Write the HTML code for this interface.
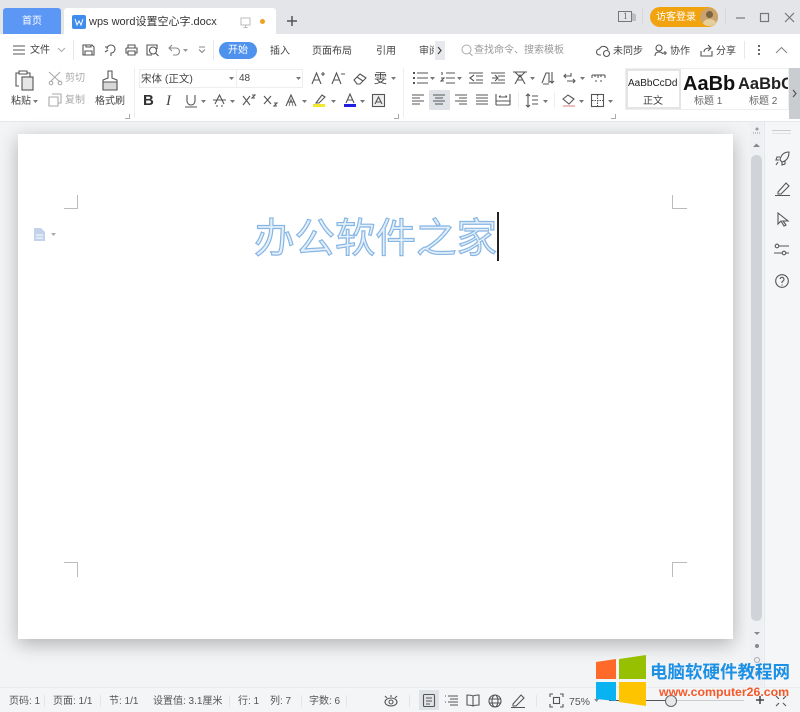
<!DOCTYPE html>
<html><head><meta charset="utf-8">
<style>
html,body{margin:0;padding:0}
body{width:800px;height:712px;overflow:hidden;position:relative;background:#f3f4f6;font-family:"Liberation Sans","Noto Sans CJK SC",sans-serif;color:#444}
.a{position:absolute;white-space:nowrap}
.t{font-size:10px;line-height:14px;color:#444}
svg{position:absolute;overflow:visible}
.ic{fill:none;stroke:#555;stroke-width:1.1}
.st{font-size:10px;line-height:14px;color:#555;top:695px}
.sp{position:absolute;top:695px;width:1px;height:12px;background:#e4e5e8}
</style></head><body>
<!-- title bar -->
<div class="a" style="left:0;top:0;width:800px;height:34px;background:#e3e5e9"></div>
<div class="a" style="left:3px;top:8px;width:58px;height:26px;background:#5d97f6;border-radius:3px 3px 0 0;color:#fff;font-size:10px;line-height:27px;text-align:center">首页</div>
<div class="a" style="left:64px;top:8px;width:212px;height:26px;background:#fff;border-radius:3px 3px 0 0"></div>
<div class="a" style="left:72px;top:15px;width:14px;height:14px;background:#3f8cec;border-radius:2px"></div>
<svg style="left:72px;top:15px" width="14" height="14"><path d="M3 4l2 6 2-4 2 4 2-6" fill="none" stroke="#fff" stroke-width="1"/></svg>
<div class="a" style="left:89px;top:15px;font-size:11px;line-height:15px;color:#333">wps word设置空心字.docx</div>
<svg style="left:240px;top:17px" width="12" height="12"><rect x="1" y="1" width="9" height="7" fill="none" stroke="#bbb"/><path d="M5.5 8v2M3.500 10.500h4" stroke="#bbb"/></svg>
<div class="a" style="left:260px;top:19px;width:5px;height:5px;border-radius:50%;background:#f0a020"></div>
<svg style="left:286px;top:15px" width="12" height="12"><path d="M6 1v10M1 6h10" stroke="#555" stroke-width="1.500"/></svg>
<svg style="left:618px;top:11px" width="18" height="12"><rect x=".5" y=".5" width="13" height="10" fill="none" stroke="#777"/><path d="M15 2v8M17 3v7" stroke="#999"/></svg>
<div class="a" style="left:623px;top:11px;font:9px/11px 'Liberation Serif';color:#666">1</div>
<div class="a" style="left:642px;top:9px;width:1px;height:15px;background:#d6d8dc"></div>
<div class="a" style="left:650px;top:7px;width:68px;height:20px;background:#f1a30f;border-radius:10px"></div>
<div class="a" style="left:656px;top:11px;font-size:10px;line-height:14px;color:#fff">访客登录</div>
<div class="a" style="left:700px;top:8px;width:18px;height:18px;border-radius:50%;background:#c9a36b;overflow:hidden"><div class="a" style="left:6px;top:3px;width:7px;height:7px;border-radius:50%;background:#7a6340"></div><div class="a" style="left:3px;top:11px;width:13px;height:9px;border-radius:50%;background:#e6cf9c"></div></div>
<div class="a" style="left:725px;top:9px;width:1px;height:15px;background:#d6d8dc"></div>
<svg style="left:735px;top:12px" width="60" height="12"><path d="M1 6h9" stroke="#777" stroke-width="1.200"/><rect x="25.500" y="1.500" width="8" height="8" fill="none" stroke="#777" stroke-width="1.200"/><path d="M50 1l9 9M59 1l-9 9" stroke="#777" stroke-width="1.200"/></svg>
<!-- ribbon -->
<div class="a" style="left:0;top:34px;width:800px;height:87px;background:#fff"></div>
<div class="a" style="left:0;top:121px;width:800px;height:1px;background:#e6e7ea"></div>
<svg style="left:13px;top:45px" width="13" height="10"><path d="M0 1h12M0 5h12M0 9h12" stroke="#555"/></svg>
<div class="a t" style="left:30px;top:44px;color:#444">文件</div>
<svg style="left:57px;top:47px" width="9" height="6"><path d="M1 1l3.500 3.500L8 1" fill="none" stroke="#aaa"/></svg>
<div class="a" style="left:73px;top:40px;width:1px;height:20px;background:#e8e8e8"></div>
<svg class="ic" style="left:82px;top:44px" width="13" height="12"><path d="M1 1h9l2 2v8H1zM3 11V7h7v4M4 1v2h5V1"/></svg>
<svg class="ic" style="left:104px;top:44px" width="13" height="13"><path d="M3 5a4 4 0 1 1 4 4v3M1 8l3-2M1 3h3"/></svg>
<svg class="ic" style="left:125px;top:44px" width="13" height="12"><path d="M3 4V1h7v3M1 4h11v5h-2M3 9H1V4M3 7h7v4H3z"/></svg>
<svg class="ic" style="left:146px;top:44px" width="13" height="13"><path d="M11 5V1H1v10h5"/><circle cx="7" cy="6.500" r="3.500"/><path d="M9.500 9l3 3"/></svg>
<svg class="ic" style="left:168px;top:44px;stroke:#888" width="13" height="12"><path d="M4 1L1 4l3 3M1 4h7a3 3 0 0 1 0 7H5"/></svg>
<svg style="left:183px;top:49px" width="6" height="4"><path d="M0 0h5L2.500 3z" fill="#999"/></svg>
<svg class="ic" style="left:198px;top:46px;stroke:#888" width="9" height="9"><path d="M1 1h6M1 3.500l3 3 3-3"/></svg>
<div class="a" style="left:213px;top:40px;width:1px;height:20px;background:#e8e8e8"></div>
<div class="a" style="left:219px;top:42px;width:38px;height:17px;border-radius:9px;background:#4e92ee;color:#fff;font-size:10px;line-height:18px;text-align:center">开始</div>
<div class="a t" style="left:270px;top:45px">插入</div>
<div class="a t" style="left:312px;top:45px">页面布局</div>
<div class="a t" style="left:376px;top:45px">引用</div>
<div class="a t" style="left:419px;top:45px;width:15px;overflow:hidden">审阅</div>
<div class="a" style="left:435px;top:41px;width:10px;height:19px;background:#e8e9ec"></div>
<svg style="left:437px;top:47px" width="6" height="8"><path d="M1 0l3 3.500L1 7" fill="none" stroke="#444" stroke-width="1.200"/></svg>
<svg style="left:461px;top:44px" width="12" height="13"><circle cx="5.500" cy="5.500" r="4.500" fill="none" stroke="#aaa"/><path d="M8.500 9l3 3" stroke="#aaa"/></svg>
<div class="a t" style="left:474px;top:44px;color:#999">查找命令、搜索模板</div>
<svg class="ic" style="left:596px;top:44px" width="15" height="13"><path d="M5 11H3.500a3 3 0 0 1 0-6 4.500 4.500 0 0 1 8.500 1"/><circle cx="10.500" cy="9.500" r="3"/></svg>
<div class="a t" style="left:613px;top:45px">未同步</div>
<svg class="ic" style="left:654px;top:44px" width="13" height="13"><circle cx="5" cy="4" r="3"/><path d="M1 12c0-3 2-4 4-4s3 .5 4 2M9 9h4M11 7v4"/></svg>
<div class="a t" style="left:670px;top:45px">协作</div>
<svg class="ic" style="left:700px;top:44px" width="13" height="13"><path d="M1 7v5h11V7M4 8c0-3 3-4 6-4M8 1l3 3-3 3"/></svg>
<div class="a t" style="left:716px;top:45px">分享</div>
<div class="a" style="left:744px;top:41px;width:1px;height:18px;background:#e8e8e8"></div>
<div class="a" style="left:758px;top:45px;width:2px;height:2px;background:#666;box-shadow:0 4px 0 #666,0 8px 0 #666"></div>
<svg style="left:775px;top:46px" width="13" height="8"><path d="M1 7l5.500-5.500L12 7" fill="none" stroke="#888" stroke-width="1.100"/></svg>
<!-- clipboard group -->
<svg class="ic" style="left:15px;top:70px" width="20" height="21"><path d="M4 16H1V3h3M12 3h3v4M4 1h8v3H4z"/><rect x="7" y="7" width="11" height="13" fill="#e6e6e6"/></svg>
<div class="a t" style="left:11px;top:95px">粘贴</div>
<svg style="left:33px;top:100px" width="5" height="3"><path d="M0 0h5L2.500 3z" fill="#777"/></svg>
<svg class="ic" style="left:48px;top:71px;stroke:#aaa" width="15" height="14"><path d="M1 1l11 10M12 1L3 10"/><circle cx="3" cy="12" r="1.800"/><circle cx="12" cy="12" r="1.800"/></svg>
<div class="a t" style="left:65px;top:72px;color:#aaa">剪切</div>
<svg class="ic" style="left:48px;top:93px;stroke:#aaa" width="14" height="14"><path d="M4 1h9v9h-3M1 4h9v9H1z"/></svg>
<div class="a t" style="left:65px;top:94px;color:#aaa">复制</div>
<svg class="ic" style="left:101px;top:70px" width="18" height="21"><path d="M7 1h4v7l5 2v10H2V10l5-2z"/><path d="M2 12h14v8H2z" fill="#d8d8d8"/></svg>
<div class="a t" style="left:95px;top:95px">格式刷</div>
<div class="a" style="left:134px;top:68px;width:1px;height:50px;background:#eee"></div>
<!-- font -->
<div class="a" style="left:139px;top:69px;width:164px;height:19px;border:1px solid #eee;box-sizing:border-box"></div>
<div class="a" style="left:236px;top:69px;width:1px;height:19px;background:#eee"></div>
<div class="a t" style="left:141px;top:72px;color:#444;font-size:10.500px">宋体 (正文)</div>
<div class="a t" style="left:239px;top:72px;color:#444">48</div>
<svg style="left:229px;top:77px" width="5" height="3"><path d="M0 0h5L2.500 3z" fill="#777"/></svg>
<svg style="left:296px;top:77px" width="5" height="3"><path d="M0 0h5L2.500 3z" fill="#777"/></svg>
<svg class="ic" style="left:311px;top:71px" width="14" height="14"><path d="M1 13L5.500 2 10 13M3 9h5M10 3h4M12 1v4"/></svg>
<svg class="ic" style="left:331px;top:71px" width="14" height="14"><path d="M1 13L5.500 2 10 13M3 9h5M10 3h4"/></svg>
<svg class="ic" style="left:353px;top:72px" width="15" height="13"><path d="M1 8l6-6 6 4-6 6H4zM4 5l6 4"/></svg>
<div class="a" style="left:374px;top:71px;font-size:13px;line-height:16px;color:#444">雯</div>
<svg style="left:391px;top:77px" width="5" height="3"><path d="M0 0h5L2.500 3z" fill="#777"/></svg>
<div class="a" style="left:143px;top:92px;font:bold 15px/18px 'Liberation Sans';color:#333">B</div>
<div class="a" style="left:166px;top:92px;font:italic 15px/18px 'Liberation Serif';color:#444">I</div>
<svg class="ic" style="left:185px;top:94px" width="12" height="14"><path d="M2 1v6a4 4 0 0 0 8 0V1M0 13h12"/></svg>
<svg style="left:201px;top:100px" width="5" height="3"><path d="M0 0h5L2.500 3z" fill="#777"/></svg>
<svg class="ic" style="left:213px;top:94px" width="13" height="13"><path d="M2 10L6.500 1 11 10M0 6h13M3 12h2M8 12h2"/></svg>
<svg style="left:230px;top:100px" width="5" height="3"><path d="M0 0h5L2.500 3z" fill="#777"/></svg>
<svg class="ic" style="left:242px;top:94px" width="15" height="12"><path d="M1 2l7 9M8 2l-7 9M10 1h3l-3 3h3"/></svg>
<svg class="ic" style="left:263px;top:94px" width="15" height="13"><path d="M1 2l7 8M8 2l-7 8M11 9h3l-3 3h3"/></svg>
<svg class="ic" style="left:285px;top:94px" width="13" height="13"><path d="M1 12L6 1l5 11M3 8h6"/><path d="M4 12L6 5l2 7" stroke-width=".7"/></svg>
<svg style="left:302px;top:100px" width="5" height="3"><path d="M0 0h5L2.500 3z" fill="#777"/></svg>
<svg class="ic" style="left:314px;top:94px" width="13" height="11"><path d="M2 9l6-8 3 2-6 6z"/></svg>
<div class="a" style="left:313px;top:104px;width:12px;height:3px;background:#f5e82c"></div>
<svg style="left:331px;top:100px" width="5" height="3"><path d="M0 0h5L2.500 3z" fill="#777"/></svg>
<svg class="ic" style="left:344px;top:93px" width="12" height="11"><path d="M2 10L6 1l4 9M3.500 7h5"/></svg>
<div class="a" style="left:344px;top:104px;width:12px;height:3px;background:#2020e0"></div>
<svg style="left:360px;top:100px" width="5" height="3"><path d="M0 0h5L2.500 3z" fill="#777"/></svg>
<svg class="ic" style="left:372px;top:94px" width="13" height="13"><rect x=".5" y=".5" width="12" height="12" fill="#eee"/><path d="M3 10l3.500-7 3.500 7M4.500 8h4"/></svg>
<svg style="left:125px;top:114px" width="5" height="5"><path d="M4.500 0v4.500H0" fill="none" stroke="#aaa"/></svg>
<svg style="left:394px;top:114px" width="5" height="5"><path d="M4.500 0v4.500H0" fill="none" stroke="#aaa"/></svg>
<div class="a" style="left:403px;top:68px;width:1px;height:50px;background:#eee"></div>
<!-- paragraph -->
<svg class="ic" style="left:412px;top:71px" width="17" height="14"><path d="M5 2h11M5 7h11M5 12h11"/><path d="M1 2h2M1 7h2M1 12h2" stroke-width="2"/></svg>
<svg style="left:430px;top:77px" width="5" height="3"><path d="M0 0h5L2.500 3z" fill="#777"/></svg>
<svg class="ic" style="left:441px;top:71px" width="14" height="14"><path d="M5 2h9M5 7h9M5 12h9M1 1v3M0 7h3l-3 3h3"/></svg>
<svg style="left:457px;top:77px" width="5" height="3"><path d="M0 0h5L2.500 3z" fill="#777"/></svg>
<svg class="ic" style="left:469px;top:72px" width="14" height="12"><path d="M0 1h14M7 4h7M7 8h7M0 11h14M5 3L1 6l4 3"/></svg>
<svg class="ic" style="left:491px;top:72px" width="14" height="12"><path d="M0 1h14M7 4h7M7 8h7M0 11h14M1 6h6M4 3l3 3-3 3"/></svg>
<svg class="ic" style="left:512px;top:71px" width="16" height="14"><path d="M1 1h14M3 13l5-9 5 9M5 9h6M3 1l5 5 5-5"/></svg>
<svg style="left:530px;top:77px" width="5" height="3"><path d="M0 0h5L2.500 3z" fill="#777"/></svg>
<svg class="ic" style="left:541px;top:71px" width="14" height="14"><path d="M1 12L5 2h3v10M2 13h6M11 1v11M9 10l2 2 2-2"/></svg>
<svg class="ic" style="left:562px;top:71px" width="16" height="14"><path d="M9 2v3H2M4 3L2 5l2 2M5 10h8M11 8l2 2-2 2"/></svg>
<svg style="left:580px;top:77px" width="5" height="3"><path d="M0 0h5L2.500 3z" fill="#777"/></svg>
<svg class="ic" style="left:591px;top:73px" width="15" height="10"><path d="M1 2h13M1 2v3M4 2v2M7 2v3M10 2v2M14 2v3M4 8h2M9 8h2"/></svg>
<div class="a" style="left:429px;top:90px;width:21px;height:20px;background:#dfe2e6;border-radius:1px"></div>
<svg class="ic" style="left:412px;top:94px" width="13" height="12"><path d="M0 1h12M0 4h8M0 7h12M0 10h8"/></svg>
<svg class="ic" style="left:433px;top:94px" width="13" height="12"><path d="M0 1h12M2 4h8M0 7h12M2 10h8"/></svg>
<svg class="ic" style="left:455px;top:94px" width="13" height="12"><path d="M0 1h12M4 4h8M0 7h12M4 10h8"/></svg>
<svg class="ic" style="left:476px;top:94px" width="13" height="12"><path d="M0 1h12M0 4h12M0 7h12M0 10h12"/></svg>
<svg class="ic" style="left:496px;top:93px" width="14" height="13"><path d="M0 1v11M14 1v11M0 8h14M0 12h14M3 4h8M3 4l1.500-1.500M11 4L9.500 2.500"/></svg>
<div class="a" style="left:518px;top:92px;width:1px;height:16px;background:#eee"></div>
<svg class="ic" style="left:526px;top:93px" width="12" height="15"><path d="M2 1v13M0 3l2-2 2 2M0 12l2 2 2-2M6 3h6M6 7h6M6 11h6"/></svg>
<svg style="left:543px;top:100px" width="5" height="3"><path d="M0 0h5L2.500 3z" fill="#777"/></svg>
<div class="a" style="left:554px;top:92px;width:1px;height:16px;background:#eee"></div>
<svg class="ic" style="left:562px;top:93px" width="14" height="14"><path d="M1 6l5-4 6 4-5 5z"/><path d="M1 13h12" stroke="#d88"/></svg>
<svg style="left:579px;top:100px" width="5" height="3"><path d="M0 0h5L2.500 3z" fill="#777"/></svg>
<svg class="ic" style="left:591px;top:94px" width="13" height="13"><rect x=".5" y=".5" width="12" height="12"/><path d="M6.500 1v11M1 6.500h11" stroke-dasharray="1.500 1"/></svg>
<svg style="left:608px;top:100px" width="5" height="3"><path d="M0 0h5L2.500 3z" fill="#777"/></svg>
<svg style="left:611px;top:114px" width="5" height="5"><path d="M4.500 0v4.500H0" fill="none" stroke="#aaa"/></svg>
<!-- styles -->
<div class="a" style="left:625px;top:68px;width:164px;height:42px;border:1px solid #eee;box-sizing:border-box;overflow:hidden"></div>
<div class="a" style="left:626px;top:69px;width:55px;height:40px;border:2px solid #e4e4e4;box-sizing:border-box"></div>
<div class="a" style="left:628px;top:77px;font:10px/14px 'Liberation Sans';color:#222">AaBbCcDd</div>
<div class="a t" style="left:643px;top:95px;color:#444">正文</div>
<div class="a" style="left:683px;top:72px;font:bold 20px/24px 'Liberation Sans';color:#111">AaBb</div>
<div class="a t" style="left:694px;top:95px;color:#666">标题 1</div>
<div class="a" style="left:738px;top:74px;width:50px;overflow:hidden;font:bold 16.500px/20px 'Liberation Sans';color:#222">AaBbC</div>
<div class="a t" style="left:749px;top:95px;color:#666">标题 2</div>
<div class="a" style="left:789px;top:68px;width:11px;height:51px;background:#c9ccd0"></div>
<svg style="left:792px;top:90px" width="6" height="8"><path d="M1 0l3 3.500L1 7" fill="none" stroke="#555" stroke-width="1.200"/></svg>
<!-- document area -->
<div class="a" style="left:18px;top:134px;width:715px;height:505px;background:#fff;box-shadow:0 5px 18px rgba(0,0,0,.28)"></div>
<div class="a" style="left:64px;top:195px;width:14px;height:14px;border-right:1px solid #bbb;border-bottom:1px solid #bbb;box-sizing:border-box"></div>
<div class="a" style="left:672px;top:195px;width:15px;height:14px;border-left:1px solid #bbb;border-bottom:1px solid #bbb;box-sizing:border-box"></div>
<div class="a" style="left:64px;top:562px;width:14px;height:15px;border-right:1px solid #bbb;border-top:1px solid #bbb;box-sizing:border-box"></div>
<div class="a" style="left:672px;top:562px;width:15px;height:15px;border-left:1px solid #bbb;border-top:1px solid #bbb;box-sizing:border-box"></div>
<svg style="left:34px;top:228px" width="22" height="13"><path d="M0 0h7l4 4v9H0z" fill="#c3d3ec"/><path d="M2 7h7M2 10h7" stroke="#fff"/><path d="M17 5h5l-2.500 3z" fill="#aaa"/></svg>
<div class="a" style="left:254px;top:210px;font:40.500px/50px 'Noto Sans CJK SC',sans-serif;color:#e4eff9;-webkit-text-stroke:1.200px #86b6e4">办公软件之家</div>
<div class="a" style="left:497px;top:212px;width:2px;height:49px;background:#222"></div>
<!-- scrollbar & right panel -->
<div class="a" style="left:750px;top:122px;width:13px;height:566px;background:#eef0f3"></div>
<div class="a" style="left:751px;top:155px;width:11px;height:466px;background:#d0d3d8;border-radius:5px"></div>
<svg style="left:753px;top:143px" width="7" height="5"><path d="M0 4l3.500-3.500L7 4z" fill="#888"/></svg>
<svg style="left:753px;top:127px" width="8" height="8"><circle cx="4" cy="2" r="1.500" fill="#999"/><path d="M0 6h8" stroke="#999" stroke-dasharray="1 1"/></svg>
<svg style="left:753px;top:630px" width="8" height="50"><path d="M1 2l3 3 3-3" fill="#888"/><circle cx="4" cy="16" r="2" fill="#888"/><circle cx="4" cy="30" r="2.500" fill="none" stroke="#aaa"/><circle cx="4" cy="43" r="2" fill="#aaa"/></svg>
<div class="a" style="left:764px;top:122px;width:36px;height:566px;background:#f5f6f8;border-left:1px solid #e6e7ea;box-sizing:border-box"></div>
<div class="a" style="left:772px;top:130px;width:19px;height:4px;border-top:1px solid #ccc;border-bottom:1px solid #e2e2e2;box-sizing:border-box"></div>
<svg class="ic" style="left:775px;top:151px" width="15" height="15"><path d="M14 1c-5 0-8 3-9 8l2 2c4-1 7-4 7-10zM5 6H2L1 9h3M10 10v3l-3 1v-3M3 11l-2 3"/></svg>
<svg class="ic" style="left:775px;top:182px" width="15" height="14"><path d="M3 10L11 1l3 3-8 8H3zM0 13.500h15"/></svg>
<svg class="ic" style="left:777px;top:212px" width="12" height="15"><path d="M1 1v11l3-3 3 5 2-1-3-4h5z"/></svg>
<svg class="ic" style="left:774px;top:243px" width="15" height="14"><circle cx="3" cy="3" r="1.800"/><path d="M5 3h10M0 10h8M12 10h3"/><circle cx="10" cy="10" r="1.800"/></svg>
<svg class="ic" style="left:775px;top:274px" width="14" height="14"><circle cx="7" cy="7" r="6.300"/><path d="M5 5a2 2 0 1 1 3 2l-1 1v1M7 10.500v1"/></svg>
<!-- status -->
<div class="a" style="left:0;top:687px;width:800px;height:25px;background:#f4f5f7;border-top:1px solid #eaebee;box-sizing:border-box"></div>
<div class="a st" style="left:9px">页码: 1</div><div class="sp" style="left:44px"></div>
<div class="a st" style="left:53px">页面: 1/1</div><div class="sp" style="left:100px"></div>
<div class="a st" style="left:109px">节: 1/1</div>
<div class="a st" style="left:153px">设置值: 3.1厘米</div><div class="sp" style="left:229px"></div>
<div class="a st" style="left:238px">行: 1</div>
<div class="a st" style="left:270px">列: 7</div><div class="sp" style="left:301px"></div>
<div class="a st" style="left:309px">字数: 6</div><div class="sp" style="left:346px"></div>
<svg class="ic" style="left:384px;top:694px" width="14" height="13"><ellipse cx="7" cy="8" rx="6" ry="4"/><circle cx="7" cy="8" r="2"/><path d="M1 2l2 2M7 1v2M13 2l-2 2"/></svg>
<div class="sp" style="left:409px"></div>
<div class="a" style="left:419px;top:690px;width:20px;height:20px;background:#dfe2e6"></div>
<svg class="ic" style="left:423px;top:694px" width="12" height="13"><rect x=".5" y=".5" width="11" height="12" rx="1"/><path d="M3 4h6M3 7h6M3 10h4"/></svg>
<svg class="ic" style="left:445px;top:695px" width="13" height="12"><path d="M3 1h10M5 4h8M3 7h10M5 10h8M0 1h1M0 7h1"/></svg>
<svg class="ic" style="left:466px;top:694px" width="14" height="13"><path d="M7 2C5 1 3 1 1 1v10c2 0 4 0 6 1 2-1 4-1 6-1V1c-2 0-4 0-6 1zM7 2v10"/></svg>
<svg class="ic" style="left:488px;top:694px" width="14" height="14"><circle cx="7" cy="7" r="6"/><ellipse cx="7" cy="7" rx="3" ry="6"/><path d="M1 5h12M1 9h12"/></svg>
<svg class="ic" style="left:511px;top:694px" width="14" height="14"><path d="M2 10L10 1l3 3-8 8H2zM0 13.500h14"/></svg>
<div class="sp" style="left:536px"></div>
<svg class="ic" style="left:550px;top:694px" width="13" height="13"><path d="M0 3V0h3M10 0h3v3M13 10v3h-3M3 13H0v-3"/><rect x="3.500" y="3.500" width="6" height="6"/></svg>
<div class="a st" style="left:569px;color:#555;font-size:10.500px">75%</div>
<svg style="left:594px;top:699px" width="5" height="3"><path d="M0 0h5L2.500 3z" fill="#888"/></svg>
<div class="a" style="left:609px;top:700px;width:62px;height:1px;background:#555"></div>
<div class="a" style="left:671px;top:700px;width:73px;height:1px;background:#ccc"></div>
<div class="a" style="left:665px;top:695px;width:10px;height:10px;border-radius:50%;background:#e8e8e8;border:1px solid #666"></div>
<svg style="left:755px;top:695px" width="10" height="10"><path d="M5 1v8M1 5h8" stroke="#444" stroke-width="1.500"/></svg>
<svg class="ic" style="left:775px;top:695px" width="12" height="12"><path d="M1 1l3 3M11 1L8 4M1 11l3-3M11 11L8 8"/></svg>
<!-- watermark -->
<svg style="left:596px;top:655px" width="50" height="51">
<polygon points="0,7 20,4 20,24 0,24" fill="#ff6a2b"/>
<polygon points="23,4 50,0 50,24 23,24" fill="#96c000"/>
<polygon points="0,27 20,27 20,46 0,44" fill="#09b3f2"/>
<polygon points="23,27 50,27 50,51 23,47" fill="#ffc400"/>
</svg>
<div class="a" style="left:650px;top:661px;font:bold 17.500px/22px 'Noto Sans CJK SC',sans-serif;color:#1c90e4">电脑软硬件教程网</div>
<div class="a" style="left:659px;top:684px;font:bold 12.300px/16px 'Liberation Sans',sans-serif;color:#f4592a">www.computer26.com</div>
</body></html>
